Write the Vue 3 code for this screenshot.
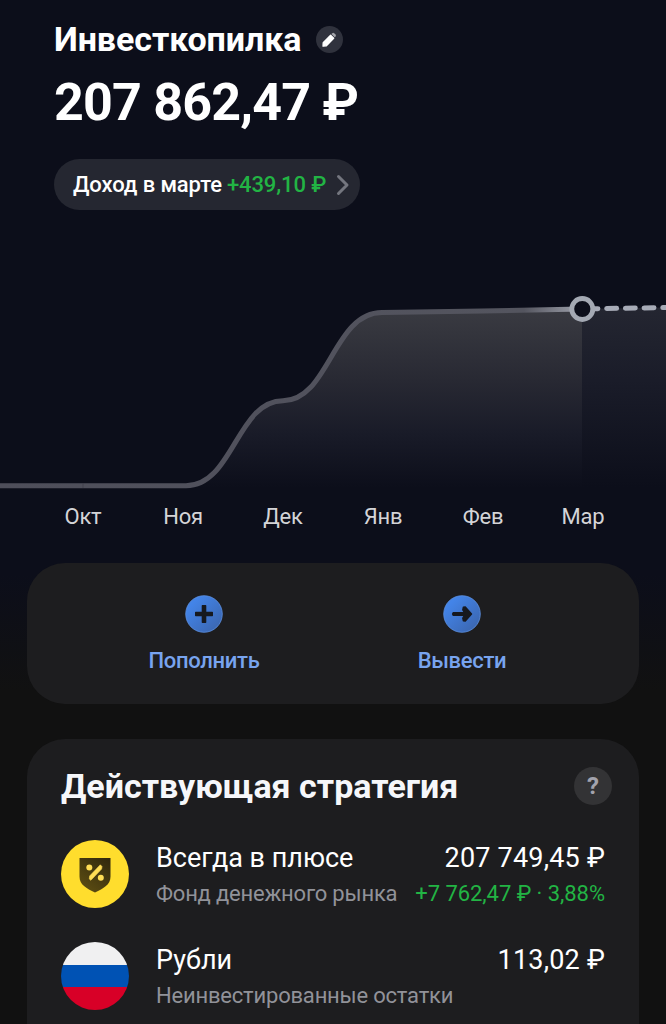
<template>
  <div class="page">
    <header class="header">
      <div class="title-row">
        <h1>Инвесткопилка</h1>
        <button class="edit-btn" aria-label="Изменить">
          <svg viewBox="0 0 27 27" width="27" height="27">
            <path d="M7 20.200L7.200 16.600L14.600 9.200L17.700 12.300L10.400 19.800Z" fill="#fff" stroke="#fff" stroke-width="1.300" stroke-linejoin="round" />
            <path d="M15.400 8l.9-.8q1-.7 1.900.1l1.300 1.300q.8.900.1 1.800l-.9.900z" fill="#a5a6ac" />
          </svg>
        </button>
      </div>
      <div class="total">207 862,47 ₽</div>
      <button class="income">
        <span>Доход в марте</span>
        <span class="plus">+439,10 ₽</span>
        <svg class="chevron" viewBox="0 0 14 22" width="14" height="22">
          <path d="M2.500 2.500L11 11l-8.500 8.500" fill="none" stroke="#74767f" stroke-width="3" stroke-linecap="round" stroke-linejoin="round" />
        </svg>
      </button>
    </header>

    <!-- GRAFIK -->
    <section class="chart">
      <svg viewBox="0 210 666 290" width="666" height="290">
        <defs>
          <linearGradient id="area" gradientUnits="userSpaceOnUse" x1="0" y1="308" x2="0" y2="488">
            <stop offset="0" stop-color="#3a3b42" />
            <stop offset="0.4" stop-color="#282933" />
            <stop offset="0.7" stop-color="#191b28" />
            <stop offset="1" stop-color="#0c0e1a" />
          </linearGradient>
          <linearGradient id="future" gradientUnits="userSpaceOnUse" x1="0" y1="308" x2="0" y2="488">
            <stop offset="0" stop-color="#242631" />
            <stop offset="0.4" stop-color="#1a1c29" />
            <stop offset="1" stop-color="#0c0e1a" />
          </linearGradient>
          <linearGradient id="line" gradientUnits="userSpaceOnUse" x1="0" y1="0" x2="582" y2="0">
            <stop offset="0" stop-color="#4e4e5a" />
            <stop offset="0.9" stop-color="#54555f" />
            <stop offset="1" stop-color="#a0a3ad" />
          </linearGradient>
        </defs>
        <path :d="curve + ' V488 H0 Z'" fill="url(#area)" />
        <path d="M582 309L666 307.500V488H582Z" fill="url(#future)" />
        <path :d="curve" fill="none" stroke="url(#line)" stroke-width="5" />
        <path d="M83 483.500v4.500" stroke="#3c3d48" stroke-width="0.7" />
        <path d="M588 308.800L670 307.500" stroke="#a7abb7" stroke-width="5" stroke-linecap="round" stroke-dasharray="9.900 8.800" />
        <circle cx="582.300" cy="309" r="10.500" fill="#0c0e1a" stroke="#a4a9b3" stroke-width="4.800" />
      </svg>
      <div class="months">
        <span v-for="month in months" :key="month">{{ month }}</span>
      </div>
    </section>

    <section class="card actions">
      <button v-for="action in actions" :key="action.name" class="action">
        <svg viewBox="0 0 38 38" width="38" height="38">
          <defs>
            <linearGradient :id="action.name" x1="0" y1="0" x2="1" y2="1">
              <stop offset="0.2" stop-color="#4384e8" />
              <stop offset="1" stop-color="#3a62a8" />
            </linearGradient>
          </defs>
          <circle cx="19" cy="19" r="18.300" :fill="`url(#${action.name})`" stroke="#5c8fe0" stroke-width="0.8" />
          <path :d="action.icon" fill="#16191f" stroke="#16191f" stroke-width="1.400" stroke-linejoin="round" />
        </svg>
        <span>{{ action.text }}</span>
      </button>
    </section>

    <section class="card strategy">
      <div class="strategy-head">
        <h2>Действующая стратегия</h2>
        <button class="help">?</button>
      </div>
      <ul>
        <li v-for="item in assets" :key="item.name">
          <svg v-if="item.icon === 'fund'" viewBox="0 0 68 68" width="68" height="68">
            <defs>
              <linearGradient id="shield" x1="1" y1="0" x2="0.300" y2="1">
                <stop offset="0" stop-color="#30270d" />
                <stop offset="1" stop-color="#5b4c12" />
              </linearGradient>
            </defs>
            <circle cx="34" cy="34" r="34" fill="#ffdd2d" />
            <path d="M18.500 18H49.500V36.500C49.500 45 42.500 48.300 34 52.500C25.500 48.300 18.500 45 18.500 36.500Z" fill="url(#shield)" />
            <path d="M39.300 24.800L41 26.500L40.600 29L29.800 40.300L28.300 39L28.600 36Z" fill="#ffdd55" stroke="#ffdd55" stroke-width="0.6" stroke-linejoin="round" />
            <circle cx="28.300" cy="27.500" r="3" fill="#ffdd55" />
            <circle cx="39.800" cy="37.700" r="3" fill="#ffdd55" />
          </svg>
          <div v-else class="flag"><i></i><i></i><i></i></div>
          <div class="info">
            <div class="line main">
              <span>{{ item.name }}</span>
              <span class="sum">{{ item.sum }}</span>
            </div>
            <div class="line sub">
              <span>{{ item.note }}</span>
              <span class="plus">{{ item.profit }}</span>
            </div>
          </div>
        </li>
      </ul>
    </section>
  </div>
</template>

<script setup>
const curve = 'M0 485.700H186C233 485.700 237 400.700 283 400.700C329 400.700 333 312.500 382 312.500L482 311L582 309'

const months = ['Окт', 'Ноя', 'Дек', 'Янв', 'Фев', 'Мар']

const actions = [
  { name: 'deposit', text: 'Пополнить', icon: 'M17.400 10.700H20.600V17.400H27.300V20.600H20.600V27.300H17.400V20.600H10.700V17.400H17.400Z' },
  { name: 'withdraw', text: 'Вывести', icon: 'M10.300 17.600H21.500L19.800 14.800L20.300 12.300L22.300 12L28.500 19L22.300 26L20.300 25.700L19.800 23.200L21.500 20.400H10.300L9.600 19Z' }
]

const assets = [
  { icon: 'fund', name: 'Всегда в плюсе', sum: '207 749,45 ₽', note: 'Фонд денежного рынка', profit: '+7 762,47 ₽ · 3,88%' },
  { icon: 'rub', name: 'Рубли', sum: '113,02 ₽', note: 'Неинвестированные остатки', profit: '' }
]
</script>

<style>
body {
  background: #111;
}
</style>

<style scoped>
.page {
  box-sizing: border-box;
  height: 1024px;
  overflow: hidden;
  background: linear-gradient(#0c0e1a 0, #0c0e1a 575px, #111 690px);
  color: #fff;
  font-family: Roboto, sans-serif;
}

button {
  padding: 0;
  border: none;
  background: none;
  color: inherit;
  font-family: inherit;
}

h1, h2 {
  margin: 0;
  font-weight: 700;
}

.header {
  height: 210px;
  box-sizing: border-box;
  padding: 19px 54px 0;
}

.title-row {
  display: flex;
  align-items: center;
  height: 40px;
  gap: 15px;
}

h1 {
  font-size: 34px;
  line-height: 40px;
  letter-spacing: -0.08px;
}

.edit-btn {
  display: flex;
  width: 27px;
  height: 27px;
  border-radius: 50%;
  background: #30323d;
}

.total {
  margin: 14px 0 26px;
  font-size: 52px;
  line-height: 60px;
  font-weight: 700;
  letter-spacing: -0.82px;
  white-space: nowrap;
}

.income {
  display: flex;
  align-items: center;
  box-sizing: border-box;
  width: 306px;
  height: 51px;
  padding-left: 19px;
  border-radius: 26px;
  background: #252731;
  font-size: 22px;
  font-weight: 500;
  letter-spacing: -0.1px;
  white-space: nowrap;
}

.income .plus {
  margin-left: 5px;
}

.plus {
  color: #22b444;
}

.chevron {
  margin-left: 10px;
}

.chart svg {
  display: block;
}

.months {
  display: grid;
  grid-template-columns: repeat(6, 1fr);
  padding: 0 33px;
  height: 32px;
  line-height: 33px;
  font-size: 22px;
  letter-spacing: -0.2px;
  color: #d4d4d7;
  text-align: center;
}

.card {
  box-sizing: border-box;
  margin: 0 27px;
  border-radius: 38px;
  background: #1d1d1f;
}

.actions {
  display: grid;
  grid-template-columns: 258px 258px;
  justify-content: center;
  height: 141px;
  margin-top: 31px;
  padding-top: 32px;
}

.action {
  display: flex;
  flex-direction: column;
  align-items: center;
  gap: 14px;
  color: #78a4ef;
  font-size: 22px;
  font-weight: 500;
  letter-spacing: -0.3px;
  line-height: 28px;
}

.strategy {
  height: 340px;
  margin-top: 35px;
  padding: 28px 27px 0 34px;
}

.strategy-head {
  display: flex;
  align-items: center;
  justify-content: space-between;
  height: 38px;
}

h2 {
  font-size: 34px;
  line-height: 38px;
  color: #f6f7fa;
}

.help {
  width: 38px;
  height: 38px;
  border-radius: 50%;
  background: #333335;
  color: #a2a3ad;
  font-size: 24px;
  font-weight: 700;
  line-height: 38px;
}

ul {
  display: grid;
  gap: 34px;
  margin: 35px 7px 0 0;
  padding: 0;
  list-style: none;
}

li {
  display: flex;
  gap: 27px;
  height: 68px;
}

.flag {
  display: grid;
  flex: none;
  width: 68px;
  height: 68px;
  border-radius: 50%;
  overflow: hidden;
}

.flag i:nth-child(1) {
  background: #f0f0f1;
}

.flag i:nth-child(2) {
  background: #0052b4;
}

.flag i:nth-child(3) {
  background: #d80027;
}

.info {
  flex: 1;
}

.line {
  display: flex;
  justify-content: space-between;
  height: 36px;
  line-height: 36px;
  white-space: nowrap;
}

.main {
  font-size: 27px;
}

.sum {
  letter-spacing: 0.2px;
}

.sub {
  font-size: 22px;
  letter-spacing: -0.2px;
  color: #919299;
}

.sub .plus {
  letter-spacing: -0.05px;
}
</style>
